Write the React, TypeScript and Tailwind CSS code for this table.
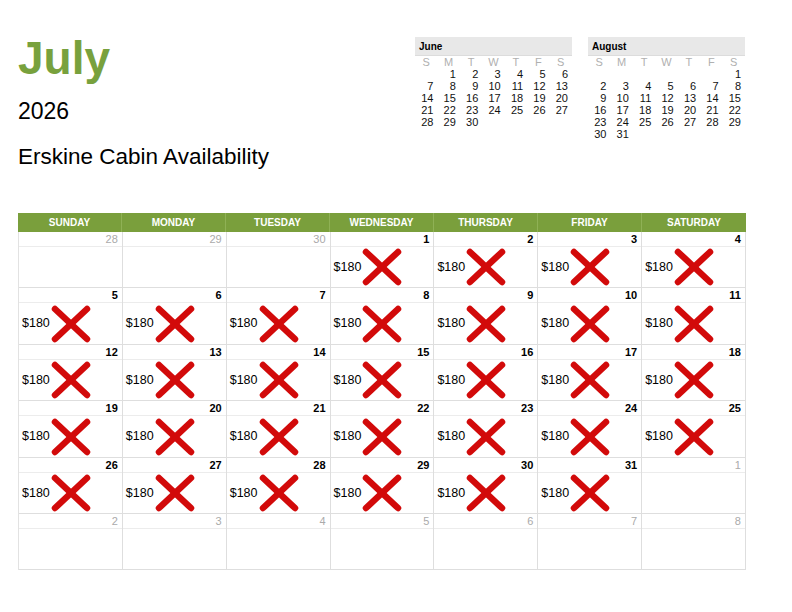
const WEEKDAYS = ["SUNDAY", "MONDAY", "TUESDAY", "WEDNESDAY", "THURSDAY", "FRIDAY", "SATURDAY"];
const LETTERS = ["S", "M", "T", "W", "T", "F", "S"];
const ROW_BODY = ["h-[40px]", "h-[41px]", "h-[40px]", "h-[41px]", "h-[40px]", "h-[40px]"];

type Day = { n: number; inMonth: boolean; booked: boolean };

function buildWeeks(): Day[][] {
  const days: Day[] = [];
  [28, 29, 30].forEach((n) => days.push({ n, inMonth: false, booked: false }));
  for (let n = 1; n <= 31; n++) days.push({ n, inMonth: true, booked: true });
  for (let n = 1; n <= 8; n++) days.push({ n, inMonth: false, booked: false });
  const weeks: Day[][] = [];
  for (let i = 0; i < days.length; i += 7) weeks.push(days.slice(i, i + 7));
  return weeks;
}

function RedX() {
  return (
    <svg width="42" height="38" viewBox="0 0 42 38" className="block">
      <g stroke="#d20a0a" strokeWidth="6.5" strokeLinecap="round">
        <line x1="5" y1="4" x2="37" y2="34" />
        <line x1="37" y1="4" x2="5" y2="34" />
      </g>
    </svg>
  );
}

function MiniMonth({ name, offset, total }: { name: string; offset: number; total: number }) {
  const cells: (number | null)[] = [];
  for (let i = 0; i < offset; i++) cells.push(null);
  for (let n = 1; n <= total; n++) cells.push(n);
  return (
    <div className="w-[157px]">
      <div className="h-[19px] bg-[#e8e8e8] border-b border-[#dcdcdc] pl-[4px] text-[10px] font-bold leading-[19px] text-black">
        {name}
      </div>
      <div className="grid grid-cols-7">
        {LETTERS.map((l, i) => (
          <div key={i} className="h-[12px] text-center text-[11px] leading-[12px] text-[#b0b0b0]">
            {l}
          </div>
        ))}
        {cells.map((c, i) => (
          <div key={i} className="h-[12px] pr-[4px] text-right text-[11px] leading-[12px] text-[#111]">
            {c ?? ""}
          </div>
        ))}
      </div>
    </div>
  );
}

export default function App() {
  const weeks = buildWeeks();
  return (
    <div
      className="w-[792px] h-[612px] bg-white relative overflow-hidden"
      style={{ fontFamily: '"Liberation Sans", Arial, sans-serif' }}
    >
      <div className="flex pl-[18px]">
        <div className="w-[397px] pt-[35px]">
          <div className="h-[47px] text-[46px] font-bold leading-none text-[#78a13d]">July</div>
          <div className="mt-[18px] h-[23px] text-[23px] leading-none text-black">2026</div>
          <div className="mt-[23px] h-[23px] text-[22.5px] leading-none text-black">
            Erskine Cabin Availability
          </div>
        </div>
        <div className="flex gap-[16px] pt-[37px]">
          <MiniMonth name="June" offset={1} total={30} />
          <MiniMonth name="August" offset={6} total={31} />
        </div>
      </div>

      <div className="ml-[18px] mt-[44px] w-[728px]">
        <div className="grid grid-cols-7 bg-[#7a9f3c] h-[19px]">
          {WEEKDAYS.map((d, i) => (
            <div
              key={d}
              className={`text-center text-[10px] font-bold leading-[19px] text-white ${i < 6 ? "border-r border-[#8fb155]" : ""}`}
            >
              {d}
            </div>
          ))}
        </div>
        <div className="border-l border-[#e2e2e2]">
          {weeks.map((week, wi) => (
            <div key={wi} className="grid grid-cols-7">
              {week.map((day, di) => (
                <div key={di} className="border-r border-b border-[#dedede]">
                  <div
                    className={`h-[15px] border-b border-[#ececec] pr-[4px] text-right text-[11px] leading-[14px] ${
                      day.inMonth ? "font-bold text-black" : "text-[#aaaaaa]"
                    }`}
                  >
                    {day.n}
                  </div>
                  <div className={`${ROW_BODY[wi]} flex items-center pl-[3px]`}>
                    {day.booked && (
                      <>
                        <span className="text-[12.5px] text-black">$180</span>
                        <RedX />
                      </>
                    )}
                  </div>
                </div>
              ))}
            </div>
          ))}
        </div>
      </div>
    </div>
  );
}
